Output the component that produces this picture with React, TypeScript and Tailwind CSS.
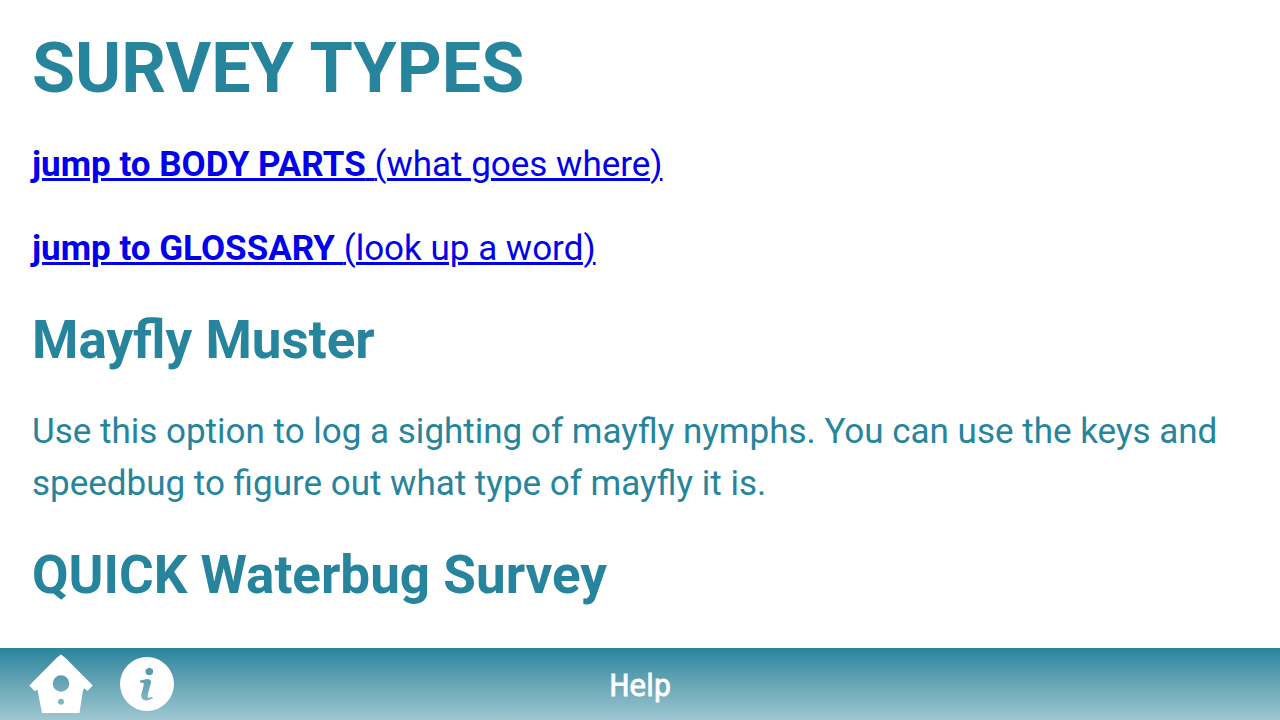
import type { ReactNode } from "react";

function SectionTitle({ children }: { children: ReactNode }) {
  return <h2 className="text-[53px] leading-[67px] font-bold">{children}</h2>;
}

function JumpLink({ href, label, hint }: { href: string; label: string; hint: string }) {
  return (
    <p>
      <a
        href={href}
        className="text-[#0000ee] underline decoration-[3px]"
      >
        <strong className="font-bold">{label} </strong>
        {hint}
      </a>
    </p>
  );
}

function BirdhouseIcon() {
  return (
    <svg viewBox="0 0 64 60" className="h-[60px] w-16" aria-hidden="true">
      <path
        fill="#fff"
        fillRule="evenodd"
        d="M32 0.5 L36 3.5 L63.8 31.5 L58.5 37 L55.5 34.5 L54 36 L50.5 59 H13 L8.5 36 L5.5 37 L0.3 31.5 L28 3.5 Z M32 21.2 a8.3 8.3 0 1 0 0 16.6 a8.3 8.3 0 1 0 0 -16.6 Z M32 44.8 a3 3 0 1 0 0 6 a3 3 0 1 0 0 -6 Z"
      />
    </svg>
  );
}

function InfoIcon() {
  return (
    <svg viewBox="0 0 54 54" className="size-[54px]" aria-hidden="true">
      <path
        fill="#fff"
        fillRule="evenodd"
        d="M27 0 a27 27 0 1 0 0 54 a27 27 0 1 0 0 -54 Z M29.3 11 a3.8 3.6 0 1 1 0 7.2 a3.8 3.6 0 1 1 0 -7.2 Z M20 23.6 L27 22 Q31.5 22.4 31 25.5 L27.8 37.5 Q27.1 40.8 28.9 40.7 L32.6 40 L32.6 41.6 Q29 43.6 25.5 43.4 Q20.3 42.7 21.4 36.8 L23.8 28 Q24.3 25.4 20 25.6 Z"
      />
    </svg>
  );
}

export default function App() {
  return (
    <div className="flex h-screen flex-col bg-white font-['Roboto',sans-serif] text-[35px] leading-[52px] text-[#26849c]">
      <main className="flex min-h-0 flex-1 flex-col gap-8 overflow-y-auto px-8 pt-[29px] [scrollbar-width:none]">
        <h1 className="text-[70px] leading-[78px] font-bold">SURVEY TYPES</h1>
        <JumpLink href="#body-parts" label="jump to BODY PARTS" hint="(what goes where)" />
        <JumpLink href="#glossary" label="jump to GLOSSARY" hint="(look up a word)" />
        <SectionTitle>Mayfly Muster</SectionTitle>
        <p>
          Use this option to log a sighting of mayfly nymphs. You can use the keys and speedbug to
          figure out what type of mayfly it is.
        </p>
        <SectionTitle>QUICK Waterbug Survey</SectionTitle>
      </main>
      <footer className="grid h-[72px] shrink-0 grid-cols-[1fr_auto_1fr] items-center bg-linear-to-b from-[#26849c] to-[#9ec7d1] px-[29px] text-white">
        <nav className="flex items-center gap-[27px]">
          <button type="button" aria-label="Home">
            <BirdhouseIcon />
          </button>
          <button type="button" aria-label="About">
            <InfoIcon />
          </button>
        </nav>
        <div className="pt-1 font-['DejaVu_Sans_Condensed','DejaVu_Sans',sans-serif] text-[30px] leading-10 [-webkit-text-stroke:1px_white]">
          Help
        </div>
      </footer>
    </div>
  );
}
